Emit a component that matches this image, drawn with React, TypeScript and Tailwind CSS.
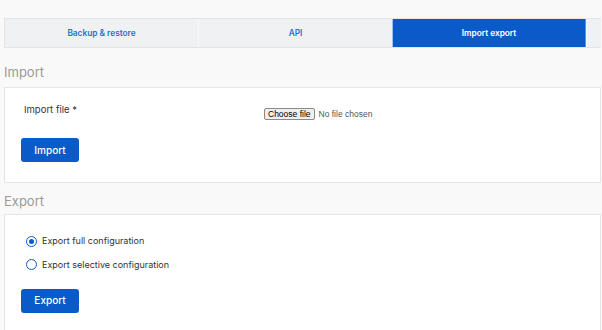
import React from "react";

const tabs = ["Backup & restore", "API", "Import export", ""];

function Radio({ checked, label }: { checked: boolean; label: string }) {
  return (
    <label className="flex items-center h-[14px] gap-[5px]">
      <span className="w-[11px] h-[11px] rounded-full border-[1.6px] border-[#0a5bc9] bg-white flex items-center justify-center">
        {checked && <span className="w-[5px] h-[5px] rounded-full bg-[#0a5bc9]" />}
      </span>
      <span className="text-[9px] leading-[14px] text-[#333]">{label}</span>
    </label>
  );
}

export default function App() {
  return (
    <div
      className="h-[330px] w-[602px] bg-[#f9f9f9] pt-[18px] pl-[4px] pr-[1px] overflow-hidden"
      style={{ fontFamily: "Inter, 'Noto Sans', sans-serif" }}
    >
      <div className="flex h-[30px] border-y border-[#e3e4e6] bg-[#f0f1f3] overflow-hidden">
        {tabs.map((t, i) => (
          <div
            key={i}
            className={
              i === 2
                ? "w-[194px] shrink-0 flex items-center justify-center bg-[#0a5bc9] text-white text-[8.3px] font-semibold border-l border-[#9fc0ea] border-r border-r-[#5a93e0]"
                : "w-[194px] shrink-0 flex items-center justify-center text-[#2b6fd0] text-[8.3px] font-semibold border-l border-[#f8f8f9] first:border-l-[#e3e4e6]"
            }
          >
            {t}
          </div>
        ))}
      </div>

      <h2 className="mt-[14px] mb-[5px] text-[13px] leading-[20px] font-normal text-[#9a9a9a]">Import</h2>
      <div className="bg-white border border-[#e6e6e6] h-[96px] pl-[16px] pt-[15px]">
        <div className="flex items-start h-[14px]">
          <span className="w-[243px] pl-[3px] text-[9.5px] leading-[14px] text-[#333]">Import file *</span>
          <span
            className="mt-[5px] flex items-center gap-[4px] text-[8.5px] text-[#444]"
            style={{ fontFamily: "'Liberation Sans', Arial, sans-serif" }}
          >
            <span className="h-[12px] px-[3px] flex items-center border border-[#8a8a8a] rounded-[2px] bg-[#efefef] text-[8.5px] text-black leading-none">
              Choose file
            </span>
            <span className="text-[#555]">No file chosen</span>
          </span>
        </div>
        <button className="mt-[21px] w-[58px] h-[24px] rounded-[3px] bg-[#0a5bc9] text-white text-[10px] font-medium">
          Import
        </button>
      </div>

      <h2 className="mt-[8px] mb-[3px] text-[13px] leading-[20px] font-normal text-[#9a9a9a]">Export</h2>
      <div className="bg-white border border-[#e6e6e6] h-[120px] pl-[21px] pt-[19px]">
        <div className="flex flex-col gap-[9.5px]">
          <Radio checked label="Export full configuration" />
          <Radio checked={false} label="Export selective configuration" />
        </div>
        <button className="mt-[17px] -ml-[5px] w-[58px] h-[24px] rounded-[3px] bg-[#0a5bc9] text-white text-[10px] font-medium">
          Export
        </button>
      </div>
    </div>
  );
}
